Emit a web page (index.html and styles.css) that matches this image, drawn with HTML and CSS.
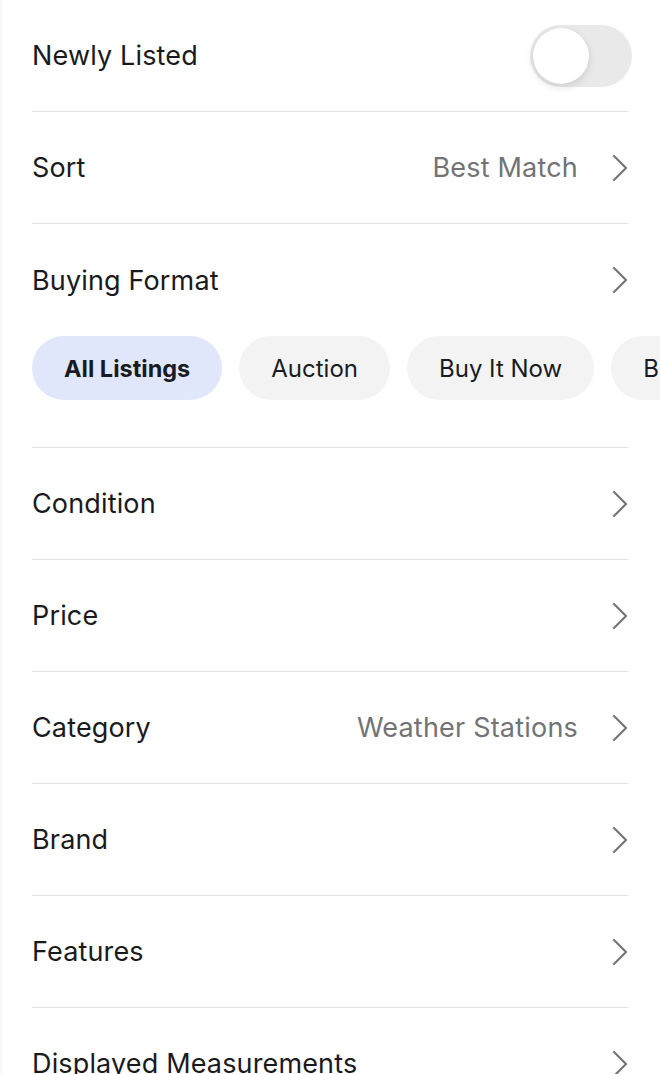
FILE: index.html
```html
<!DOCTYPE html>
<html lang="en">
<head>
<meta charset="utf-8">
<title>Filters</title>
<link rel="stylesheet" href="styles.css">
</head>
<body>
<div class="sheet">
  <div class="row">
    <span class="label">Newly Listed</span>
    <span class="toggle"><span class="knob"></span></span>
  </div>
  <div class="row">
    <span class="label">Sort</span>
    <span class="right"><span class="value">Best Match</span><svg class="chev" viewBox="0 0 16 28"><path d="M2 2 L14 14 L2 26"/></svg></span>
  </div>
  <div class="section">
    <div class="row plain">
      <span class="label">Buying Format</span>
      <span class="right"><svg class="chev" viewBox="0 0 16 28"><path d="M2 2 L14 14 L2 26"/></svg></span>
    </div>
    <div class="pills">
      <span class="pill active">All Listings</span>
      <span class="pill">Auction</span>
      <span class="pill">Buy It Now</span>
      <span class="pill">Best Offer</span>
    </div>
  </div>
  <div class="row">
    <span class="label">Condition</span>
    <span class="right"><svg class="chev" viewBox="0 0 16 28"><path d="M2 2 L14 14 L2 26"/></svg></span>
  </div>
  <div class="row">
    <span class="label">Price</span>
    <span class="right"><svg class="chev" viewBox="0 0 16 28"><path d="M2 2 L14 14 L2 26"/></svg></span>
  </div>
  <div class="row">
    <span class="label">Category</span>
    <span class="right"><span class="value">Weather Stations</span><svg class="chev" viewBox="0 0 16 28"><path d="M2 2 L14 14 L2 26"/></svg></span>
  </div>
  <div class="row">
    <span class="label">Brand</span>
    <span class="right"><svg class="chev" viewBox="0 0 16 28"><path d="M2 2 L14 14 L2 26"/></svg></span>
  </div>
  <div class="row">
    <span class="label">Features</span>
    <span class="right"><svg class="chev" viewBox="0 0 16 28"><path d="M2 2 L14 14 L2 26"/></svg></span>
  </div>
  <div class="row">
    <span class="label">Displayed Measurements</span>
    <span class="right"><svg class="chev" viewBox="0 0 16 28"><path d="M2 2 L14 14 L2 26"/></svg></span>
  </div>
</div>
</body>
</html>
```
FILE: styles.css
```css
html, body {
  margin: 0;
  padding: 0;
  background: #ffffff;
}
body {
  font-family: Inter, "Noto Sans", "Liberation Sans", sans-serif;
  color: #1a1a1c;
  overflow: hidden;
  height: 1074px;
}
.sheet {
  height: 1074px;
  overflow: hidden;
  box-shadow: inset 3px 0 3px -2px rgba(0, 0, 0, 0.06);
}
.row {
  height: 111px;
  margin: 0 32px 0 32px;
  border-bottom: 1px solid #e3e3e5;
  display: flex;
  align-items: center;
  justify-content: space-between;
}
.row.plain {
  height: 112px;
  border-bottom: none;
}
.section {
  margin: 0 32px;
  border-bottom: 1px solid #e3e3e5;
  padding-bottom: 47px;
}
.section .row {
  margin: 0;
}
.label {
  font-size: 27px;
  letter-spacing: 0.15px;
}
.right {
  display: flex;
  align-items: center;
  gap: 34px;
}
.value {
  font-size: 27px;
  letter-spacing: 0.2px;
  color: #737376;
}
.chev {
  width: 16px;
  height: 28px;
  margin-right: 0;
}
.chev path {
  fill: none;
  stroke: #77777a;
  stroke-width: 2.2;
  stroke-linecap: round;
  stroke-linejoin: round;
}
.toggle {
  width: 102px;
  height: 62px;
  border-radius: 31px;
  background: #e9e9ea;
  position: relative;
  margin-right: -4px;
}
.knob {
  position: absolute;
  left: 3px;
  top: 3px;
  width: 56px;
  height: 56px;
  border-radius: 50%;
  background: #ffffff;
  box-shadow: 0 3px 8px rgba(0, 0, 0, 0.12), 0 0 1px rgba(0, 0, 0, 0.08);
}
.pills {
  display: flex;
  gap: 17px;
  margin-right: -32px;
  overflow: hidden;
}
.pill {
  flex: none;
  height: 64px;
  display: flex;
  align-items: center;
  padding: 0 32px;
  border-radius: 32px;
  background: #f3f3f4;
  font-size: 24px;
  color: #191b22;
}
.pill.active {
  background: #e1e7fb;
  font-weight: 700;
  font-size: 23.5px;
}
```
